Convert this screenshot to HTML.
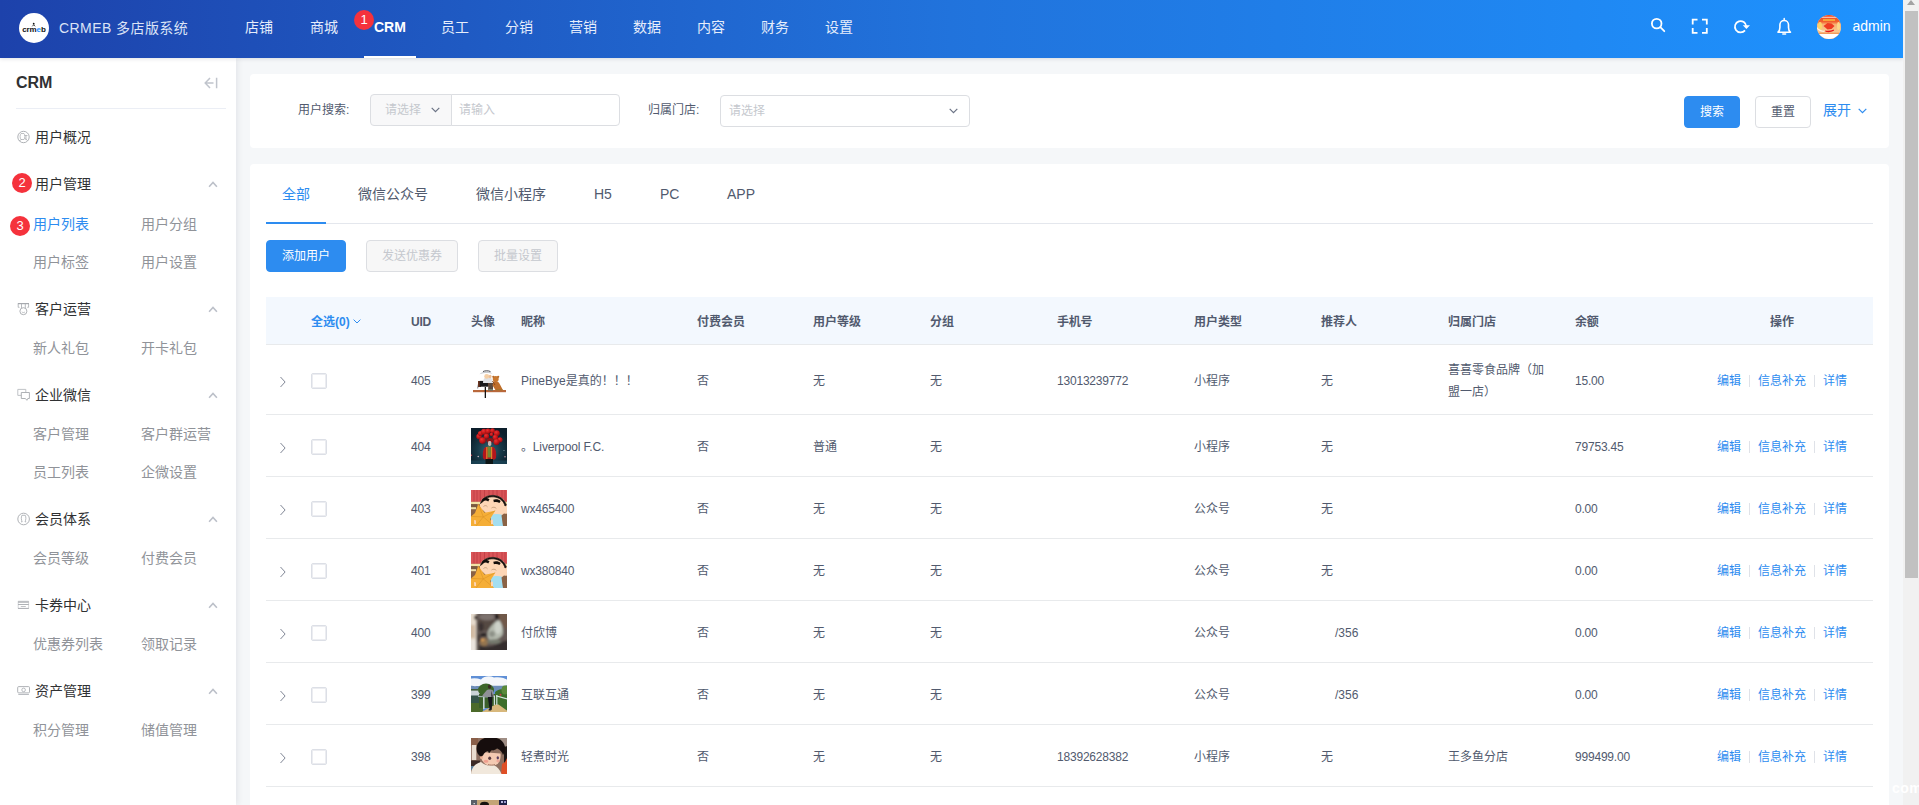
<!DOCTYPE html>
<html lang="zh-CN">
<head>
<meta charset="utf-8">
<title>CRMEB 多店版系统</title>
<style>
*{box-sizing:border-box;margin:0;padding:0}
html,body{width:1919px;height:805px;overflow:hidden;background:#f5f7f9}
body{font-family:"Liberation Sans","Noto Sans CJK SC",sans-serif;font-size:14px;color:#515a6e;position:relative}
.abs{position:absolute}
/* header */
#hd{position:absolute;left:0;top:0;width:1903px;height:58px;background:linear-gradient(90deg,#1d42ab 0%,#2173dc 50%,#1e93ff 100%);box-shadow:0 1px 4px rgba(0,21,41,.12);z-index:5}
#logo{position:absolute;left:19px;top:13px;width:30px;height:30px;border-radius:50%;background:#fff;overflow:hidden}
#title{position:absolute;left:59px;top:0;line-height:57px;font-size:14px;color:#dbe3f6;white-space:nowrap;letter-spacing:.43px}
.nav{position:absolute;top:0;line-height:54px;font-size:14px;color:#e6edfb;white-space:nowrap}
.nav.on{color:#fff;font-weight:bold}
#navline{position:absolute;left:364px;top:56px;width:52px;height:2px;background:#fff}
.badge{position:absolute;border-radius:50%;background:#f5323c;color:#fff;text-align:center;font-size:12px;z-index:9}
#admin{position:absolute;left:1852.500px;top:0;line-height:52px;font-size:14px;color:#fff}
#avatar{position:absolute;left:1817px;top:15px;width:24px;height:24px;border-radius:50%;overflow:hidden;background:#f6d9b0}
.hico{position:absolute;top:17px}
/* scrollbar */
#sb{position:absolute;left:1903px;top:0;width:16px;height:805px;background:#f1f1f1;z-index:6}
#sb i{position:absolute;left:2px;top:11px;width:13px;height:567px;background:#c1c1c1}
#sb b{position:absolute;left:4px;top:0px;width:0;height:0;border:4px solid transparent;border-top:0;border-bottom:5px solid #a3a3a3}
/* sidebar */
#side{position:absolute;left:0;top:58px;width:236px;height:747px;background:#fff;box-shadow:2px 0 6px rgba(0,21,41,.07);z-index:3}
#side h2{position:absolute;left:16px;top:15px;font-size:16px;line-height:20px;color:#303133;font-weight:bold}
#side hr{position:absolute;left:16px;top:50px;width:210px;border:0;border-top:1px solid #ebeef5}
.m1{position:absolute;left:35px;font-size:14px;line-height:20px;color:#303133;white-space:nowrap}
.m2{position:absolute;font-size:14px;line-height:20px;color:#909399;white-space:nowrap}
.m2.on{color:#2d8cf0}
.mi{position:absolute;left:17px}
.chev{position:absolute;left:208px;margin-top:-1px}
/* cards */
.card{position:absolute;left:250px;width:1639px;background:#fff;border-radius:4px}
.lbl{position:absolute;font-size:12px;line-height:20px;color:#515a6e;white-space:nowrap}
.ph{color:#c5c8ce;font-size:12px}
.btn{position:absolute;height:32px;line-height:30px;font-size:12px;border-radius:4px;text-align:center;border:1px solid transparent;white-space:nowrap}
.btn.pri{background:#2d8cf0;color:#fff;border-color:#2d8cf0}
.btn.def{background:#fff;color:#515a6e;border-color:#dcdee2}
.btn.dis{background:#f7f7f7;color:#c5c8ce;border-color:#dcdee2}
.tab{position:absolute;top:20px;font-size:14px;line-height:20px;color:#515a6e;white-space:nowrap}
.tab.on{color:#2d8cf0}
/* table */
#tb{position:absolute;left:16px;top:133px;width:1607px}
#th{position:absolute;left:0;top:0;width:1607px;height:48px;background:#f3f8fe;border-bottom:1px solid #e8eaec}
#th span{position:absolute;top:15px;line-height:20px;font-size:12px;font-weight:bold;color:#515a6e;white-space:nowrap}
.row{position:absolute;left:0;width:1607px;border-bottom:1px solid #e8eaec;font-size:12px;color:#515a6e}
.row span{position:absolute;line-height:22px;white-space:nowrap;top:50%;margin-top:-10px}
.row .cb{position:absolute;left:45px;top:50%;margin-top:-7px;width:16px;height:16px;border:1px solid #dcdfe6;border-radius:2px;background:#fff;box-shadow:inset 0 0 0 1px rgba(220,223,230,.55)}
.row .ar{position:absolute;left:13px;top:50%;margin-top:-4px}
.row .av{position:absolute;left:205px;top:50%;margin-top:-18px;width:36px;height:36px;overflow:hidden}
.row a{color:#2d8cf0;text-decoration:none}
.row .sep{position:absolute;top:50%;margin-top:-5px;width:1px;height:12px;background:#dfe2e8}
.c1{left:145px}.c3{left:255px}.c4{left:431px}.c5{left:547px}.c6{left:664px}.c7{left:791px}.c8{left:928px}.c9{left:1055px}.c10{left:1182px}.c11{left:1309px}
.c1,.c7,.c11,.ls{letter-spacing:-.2px}
.a1{left:1451px}.a2{left:1492px}.a3{left:1557px}
</style>
</head>
<body>
<div id="hd">
<div id="logo"><svg width="30" height="30" viewBox="0 0 30 30"><text x="15" y="18.5" text-anchor="middle" font-family="Liberation Sans,sans-serif" font-weight="bold" font-size="8" letter-spacing="-.1" fill="#111">crm<tspan fill="#1e90ff">e</tspan>b</text><circle cx="14.700" cy="10.700" r=".9" fill="#111"/><path d="M13.300 13.300l1.400-1.500 1.400 1.500" stroke="#111" stroke-width=".8" fill="none"/></svg></div>
<div id="title">CRMEB 多店版系统</div>
<div class="nav" style="left:245px">店铺</div>
<div class="nav" style="left:310px">商城</div>
<div class="nav on" style="left:374px">CRM</div>
<div class="nav" style="left:441px">员工</div>
<div class="nav" style="left:505px">分销</div>
<div class="nav" style="left:569px">营销</div>
<div class="nav" style="left:633px">数据</div>
<div class="nav" style="left:697px">内容</div>
<div class="nav" style="left:761px">财务</div>
<div class="nav" style="left:825px">设置</div>
<div id="navline"></div>
<div class="badge" style="left:354px;top:10px;width:20px;height:20px;line-height:20px;font-size:13px">1</div>
<svg class="abs" style="left:1640px;top:8px" width="160" height="40" viewBox="1640 8 160 40" fill="none" stroke="#fff" stroke-width="1.800">
<circle cx="1656.700" cy="23.600" r="4.800"/><path d="M1660.300 27.200l4 4" stroke-linecap="round"/>
<path d="M1692.700 24.400v-4.800h4.800M1702 19.600h4.800v4.800M1706.800 28.100v4.800H1702M1697.500 32.900h-4.800v-4.800"/>
<path d="M1745 30.400a5.700 5.700 0 1 1 1.300-3.900" stroke-width="1.700"/><path d="M1742.800 25.200h7.200l-3.600 3.800z" fill="#fff" stroke="none"/>
<path d="M1778 32.200c1.500-1.200 1.900-2.600 1.900-4.600v-2.800a4.300 4.300 0 0 1 8.600 0v2.800c0 2 .4 3.400 1.900 4.600z" stroke-width="1.600" stroke-linejoin="round"/><path d="M1784.200 18.500v1.200M1782.800 34h2.800" stroke-width="1.500" stroke-linecap="round"/>
</svg>
<div id="avatar"><svg width="24" height="24" viewBox="0 0 24 24"><defs><linearGradient id="ag" x1="0" y1="0" x2="0" y2="1"><stop offset="0" stop-color="#ef4a26"/><stop offset=".28" stop-color="#f2602e"/><stop offset=".4" stop-color="#f8b576"/><stop offset=".7" stop-color="#f9c890"/><stop offset=".8" stop-color="#f08848"/></linearGradient></defs><rect width="24" height="24" fill="url(#ag)"/><rect x="4.500" y="1.800" width="15.500" height=".9" fill="#fde9dd"/><rect x="6" y="4.200" width="12" height="1.600" fill="#f9b83c"/><ellipse cx="3" cy="11" rx="2" ry="4" fill="#fbd36a"/><ellipse cx="21.500" cy="11" rx="1.500" ry="4" fill="#fbd98a"/><path d="M6.500 11l4-3 4 .5 3 2.500-3 3-4 .5z" fill="#ee3b22"/><path d="M8.200 15.500c3 .5 6 .2 8.500-1l.3 1.300c-2.500 1.400-6 1.700-8.500 1z" fill="#e8131a"/><path d="M0 12c2 3 6 4 8 3.600L7 17c-3 0-5-1-7-3z" fill="#fdf0e2"/><rect y="19" width="24" height="5" fill="#fff"/></svg></div>
<div id="admin">admin</div>
</div>
<div id="sb"><b></b><i></i></div>
<div id="side">
<h2>CRM</h2>
<svg class="abs" style="left:204px;top:19px" width="14" height="12" viewBox="0 0 14 12" fill="none" stroke="#c0c4cc" stroke-width="1.500"><path d="M1.200 6h8.300M6 1L1.200 6 6 11M12.600 .8v10.400"/></svg>
<hr>
<div class="m1" style="top:69px">用户概况</div>
<div class="m1" style="top:116px">用户管理</div>
<svg class="chev" style="top:124px" width="10" height="7" viewBox="0 0 10 7" fill="none" stroke="#bcc0c9" stroke-width="1.600"><path d="M1.100 5.700L5 1.500l3.900 4.200"/></svg>
<div class="m2 on" style="left:33px;top:156px">用户列表</div>
<div class="m2" style="left:141px;top:156px">用户分组</div>
<div class="m2" style="left:33px;top:194px">用户标签</div>
<div class="m2" style="left:141px;top:194px">用户设置</div>
<div class="m1" style="top:241px">客户运营</div>
<svg class="chev" style="top:249px" width="10" height="7" viewBox="0 0 10 7" fill="none" stroke="#bcc0c9" stroke-width="1.600"><path d="M1.100 5.700L5 1.500l3.900 4.200"/></svg>
<div class="m2" style="left:33px;top:280px">新人礼包</div>
<div class="m2" style="left:141px;top:280px">开卡礼包</div>
<div class="m1" style="top:327px">企业微信</div>
<svg class="chev" style="top:335px" width="10" height="7" viewBox="0 0 10 7" fill="none" stroke="#bcc0c9" stroke-width="1.600"><path d="M1.100 5.700L5 1.500l3.900 4.200"/></svg>
<div class="m2" style="left:33px;top:366px">客户管理</div>
<div class="m2" style="left:141px;top:366px">客户群运营</div>
<div class="m2" style="left:33px;top:404px">员工列表</div>
<div class="m2" style="left:141px;top:404px">企微设置</div>
<div class="m1" style="top:451px">会员体系</div>
<svg class="chev" style="top:459px" width="10" height="7" viewBox="0 0 10 7" fill="none" stroke="#bcc0c9" stroke-width="1.600"><path d="M1.100 5.700L5 1.500l3.900 4.200"/></svg>
<div class="m2" style="left:33px;top:490px">会员等级</div>
<div class="m2" style="left:141px;top:490px">付费会员</div>
<div class="m1" style="top:537px">卡券中心</div>
<svg class="chev" style="top:545px" width="10" height="7" viewBox="0 0 10 7" fill="none" stroke="#bcc0c9" stroke-width="1.600"><path d="M1.100 5.700L5 1.500l3.900 4.200"/></svg>
<div class="m2" style="left:33px;top:576px">优惠券列表</div>
<div class="m2" style="left:141px;top:576px">领取记录</div>
<div class="m1" style="top:623px">资产管理</div>
<svg class="chev" style="top:631px" width="10" height="7" viewBox="0 0 10 7" fill="none" stroke="#bcc0c9" stroke-width="1.600"><path d="M1.100 5.700L5 1.500l3.900 4.200"/></svg>
<div class="m2" style="left:33px;top:662px">积分管理</div>
<div class="m2" style="left:141px;top:662px">储值管理</div>
<svg class="abs" style="left:15px;top:62px" width="17" height="650" viewBox="15 120 17 650" fill="none" stroke="#a6a9ae" stroke-width=".9">
<circle cx="23.500" cy="137" r="5.700"/><path d="M21 133.500c-1.200 1.200-1.200 4.800 0 6h3c1.200-1.200 1.200-4.800 0-6zM24.500 135.500h3M26 135.500v4.500M24.500 138l3 2.500M19 141l2.500-1.500" stroke-width=".7"/>
<path d="M17.800 303.600h11.200" stroke-width="1.200"/><path d="M18.200 304v3.300h1.300M28.600 304v3.300h-1.300M21.500 304v4.200M25.300 304v4.200" stroke-width=".8"/><circle cx="23.400" cy="311.200" r="3.500"/><path d="M21.800 311.800c.8 1 2.400 1 3.200 0" stroke-width=".7"/>
<path d="M21.300 395.400h-3.500v-6h8v3.100" stroke="#b9bcc1"/><path d="M21.300 392.500h8.100v6h-1.600l-.9 1.800-1.500-1.800h-4.100z"/>
<circle cx="23.600" cy="519" r="5.800"/><path d="M21 521.800h1.200c-1-2-1.200-4.500-.3-6.500h3.400c.9 2 .7 4.500-.3 6.500h1.200" stroke-width=".8"/>
<path d="M18.200 601.200h10.400v7.300H18.200z" stroke-width=".7" stroke="#c4c6ca"/><path d="M18 602h10.800" stroke-width="1.600" stroke="#b4b6ba"/><path d="M18 604.500h10.800M18 608.400h10.800" stroke-width=".9"/><path d="M20.800 606.500h5" stroke-width=".7"/>
<rect x="17.700" y="686.600" width="11.800" height="6.300" rx="1"/><circle cx="23.600" cy="689.900" r="1.800" stroke-width=".8"/><path d="M18.300 694.500h10.600" stroke-width="1" stroke="#b9bcc1"/>
</svg>
<div class="badge" style="left:12px;top:115px;width:20px;height:20px;line-height:20px;font-size:13px">2</div>
<div class="badge" style="left:10px;top:158px;width:20px;height:20px;line-height:20px;font-size:13px">3</div>
</div>
<div class="card" id="c1" style="top:74px;height:74px">
<div class="lbl" style="left:48px;top:26px">用户搜索:</div>
<div class="abs" style="left:120px;top:20px;width:82px;height:32px;border:1px solid #dcdee2;border-radius:4px 0 0 4px;background:#f8f8f9"></div>
<div class="abs" style="left:201px;top:20px;width:169px;height:32px;border:1px solid #dcdee2;border-radius:0 4px 4px 0;background:#fff"></div>
<div class="lbl ph" style="left:135px;top:26px">请选择</div>
<svg class="abs" style="left:181px;top:33px" width="9" height="6" viewBox="0 0 9 6" fill="none" stroke="#6b7385" stroke-width="1.200"><path d="M.7.900L4.500 4.700 8.300.900"/></svg>
<div class="lbl ph" style="left:209px;top:26px">请输入</div>
<div class="lbl" style="left:398px;top:26px">归属门店:</div>
<div class="abs" style="left:470px;top:21px;width:250px;height:32px;border:1px solid #dcdee2;border-radius:4px;background:#fff"></div>
<div class="lbl ph" style="left:479px;top:27px">请选择</div>
<svg class="abs" style="left:699px;top:34px" width="9" height="6" viewBox="0 0 9 6" fill="none" stroke="#6b7385" stroke-width="1.200"><path d="M.7.900L4.500 4.700 8.300.900"/></svg>
<div class="btn pri" style="left:1434px;top:22px;width:56px">搜索</div>
<div class="btn def" style="left:1505px;top:22px;width:56px">重置</div>
<div class="abs" style="left:1573px;top:26px;font-size:14px;line-height:20px;color:#2d8cf0">展开</div>
<svg class="abs" style="left:1608px;top:34px" width="9" height="6" viewBox="0 0 9 6" fill="none" stroke="#2d8cf0" stroke-width="1.200"><path d="M.7.900L4.500 4.700 8.300.900"/></svg>
</div>
<div class="card" id="c2" style="top:164px;height:700px">
<div class="abs" style="left:16px;top:59px;width:1607px;height:1px;background:#e4e7ed"></div>
<div class="abs" style="left:16px;top:58px;width:60px;height:2px;background:#2d8cf0"></div>
<div class="tab on" style="left:32px">全部</div>
<div class="tab" style="left:108px">微信公众号</div>
<div class="tab" style="left:226px">微信小程序</div>
<div class="tab" style="left:344px">H5</div>
<div class="tab" style="left:410px">PC</div>
<div class="tab" style="left:477px">APP</div>
<div class="btn pri" style="left:16px;top:76px;width:80px">添加用户</div>
<div class="btn dis" style="left:116px;top:76px;width:92px">发送优惠券</div>
<div class="btn dis" style="left:228px;top:76px;width:80px">批量设置</div>
<div id="tb">
<div id="th"><span style="left:45px;color:#2d8cf0">全选(0)</span><svg class="abs" style="left:87px;top:22px" width="8" height="5" viewBox="0 0 8 5" fill="none" stroke="#2d8cf0" stroke-width="1"><path d="M.6.600L4 4 7.400.600"/></svg><span class="c1">UID</span><span style="left:205px">头像</span><span class="c3">昵称</span><span class="c4">付费会员</span><span class="c5">用户等级</span><span class="c6">分组</span><span class="c7">手机号</span><span class="c8">用户类型</span><span class="c9">推荐人</span><span class="c10">归属门店</span><span class="c11">余额</span><span style="left:1504px">操作</span></div>
<div class="row" style="top:48px;height:70px"><svg class="ar" width="8" height="12" viewBox="0 0 8 12" fill="none" stroke="#808695" stroke-width="1"><path d="M1.500 1l4.600 5-4.600 5"/></svg><div class="cb"></div><span class="c1">405</span><div class="av"><svg width="36" height="36" viewBox="0 0 36 36"><rect width="36" height="36" fill="#fff"/><rect x="2" y="28" width="33" height="2.200" fill="#b9683c"/><rect x="13.700" y="25" width="1.300" height="11" fill="#141414"/><path d="M6.500 26.500l1.200-5" stroke="#9aa0a6" stroke-width="1.200"/><rect x="7" y="19" width="3" height="6" fill="#6a3520"/><rect x="8.700" y="18.900" width="8.500" height="5.800" fill="#19191b"/><rect x="17" y="19.500" width="2" height="5" fill="#6a3a22"/><path d="M12 21c0-4 2-6.500 5-6.500s4.500 2.500 4.500 6.500z" fill="#dfe2e6"/><ellipse cx="15.700" cy="14.400" rx="2.500" ry="2.400" fill="#f5cfa6"/><ellipse cx="19.200" cy="14.600" rx="1.400" ry="1.800" fill="#eebf95"/><path d="M8.500 12.300c2-3.200 10-4.200 13-.4-3-1.200-9-1.200-13 .4z" fill="#c8ccd2"/><path d="M12 9.600c1.500-1 5.500-1.200 7.500 0" stroke="#3a3a40" stroke-width=".9" fill="none"/><path d="M17.500 21h4.500v7.500h-5z" fill="#5b4a3f"/><path d="M17 27h5v1.500h-5z" fill="#76806a"/><circle cx="24.700" cy="17" r="3" fill="#c9782f"/><circle cx="22.300" cy="14.800" r="1.100" fill="#b86a28"/><circle cx="27.200" cy="14.800" r="1.100" fill="#b86a28"/><path d="M22.500 19.500c3-1 5.500 0 6.500 3l3 5.700h-7.500l-3-5z" fill="#bf6e2a"/><path d="M25 27.200h6.500v1.300H25z" fill="#a8742e"/><path d="M21.500 19l2.500 4" stroke="#8a4a1e" stroke-width="1"/></svg></div><span class="c3">PineBye是真的！！！</span><span class="c4">否</span><span class="c5">无</span><span class="c6">无</span><span class="c7">13013239772</span><span class="c8">小程序</span><span class="c9">无</span><span class="c10" style="margin-top:-21px">喜喜零食品牌（加<br>盟一店）</span><span class="c11">15.00</span><span class="a1"><a>编辑</a></span><i class="sep" style="left:1483px"></i><span class="a2"><a>信息补充</a></span><i class="sep" style="left:1548px"></i><span class="a3"><a>详情</a></span></div>
<div class="row" style="top:118px;height:62px"><svg class="ar" width="8" height="12" viewBox="0 0 8 12" fill="none" stroke="#808695" stroke-width="1"><path d="M1.500 1l4.600 5-4.600 5"/></svg><div class="cb"></div><span class="c1">404</span><div class="av"><svg width="36" height="36" viewBox="0 0 36 36"><defs><radialGradient id="g404" cx=".5" cy=".62" r=".6"><stop offset="0" stop-color="#2f6676"/><stop offset=".55" stop-color="#173847"/><stop offset="1" stop-color="#0c1e2b"/></radialGradient><filter id="b4"><feGaussianBlur stdDeviation=".45"/></filter><radialGradient id="bl" cx=".38" cy=".32" r=".75"><stop offset="0" stop-color="#e83434"/><stop offset=".55" stop-color="#c31417"/><stop offset="1" stop-color="#7c0c12"/></radialGradient></defs><rect width="36" height="36" fill="url(#g404)"/><rect y="32.500" width="36" height="3.500" fill="#1d4a5c" opacity=".7"/><g filter="url(#b4)"><g fill="url(#bl)"><circle cx="8" cy="8.500" r="2.700"/><circle cx="9.500" cy="5.500" r="2.600"/><circle cx="13" cy="3.800" r="3"/><circle cx="17" cy="3.200" r="2.700"/><circle cx="15.500" cy="8.300" r="2.700"/><circle cx="11.500" cy="12.600" r="3.300"/><circle cx="21.500" cy="2.800" r="2.500"/><circle cx="25.800" cy="5.300" r="3"/><circle cx="24.300" cy="9.600" r="2.800"/><circle cx="29" cy="11.800" r="2.600"/><circle cx="25.500" cy="14" r="3.100"/><circle cx="20.500" cy="6.500" r="1.800"/></g><ellipse cx="18.800" cy="12.400" rx="3.400" ry="2.400" fill="#8f1319"/><rect x="17" y="13" width="3.300" height="5" rx="1.400" fill="#c9b4b0"/><path d="M12 30c-.6-5 0-9 2.500-11h8c2.500 2 3.200 6 2.500 11-1 1.500-2 1.800-3 1.600h-7c-1.200.2-2.200-.2-3-1.600z" fill="#b3161f"/><rect x="16.500" y="18.500" width="3.400" height="11" fill="#6f8a34"/><rect x="15.200" y="19" width="1.200" height="12" fill="#e0822a"/><rect x="20" y="19" width="1.200" height="12" fill="#e0822a"/><rect x="14.500" y="31" width="7.500" height="5" fill="#0f1318"/></g><circle cx="7.200" cy="28.500" r=".7" fill="#e9c8d0"/><circle cx="34" cy="28.800" r=".7" fill="#d9a0b0"/><circle cx="33" cy="22.500" r=".5" fill="#9fb8c0"/><circle cx="0.500" cy="27.200" r=".7" fill="#d04050"/></svg></div><span class="c3" style="letter-spacing:-.15px">。Liverpool F.C.</span><span class="c4">否</span><span class="c5">普通</span><span class="c6">无</span><span class="c8">小程序</span><span class="c9">无</span><span class="c11">79753.45</span><span class="a1"><a>编辑</a></span><i class="sep" style="left:1483px"></i><span class="a2"><a>信息补充</a></span><i class="sep" style="left:1548px"></i><span class="a3"><a>详情</a></span></div>
<div class="row" style="top:180px;height:62px"><svg class="ar" width="8" height="12" viewBox="0 0 8 12" fill="none" stroke="#808695" stroke-width="1"><path d="M1.500 1l4.600 5-4.600 5"/></svg><div class="cb"></div><span class="c1">403</span><div class="av"><svg width="36" height="36" viewBox="0 0 36 36"><rect width="36" height="36" fill="#8a6245"/><rect width="36" height="11.800" fill="#d95558"/><g stroke="#b9383f" stroke-width=".7"><path d="M3 0v11.800M6 0v11.800M9.300 0v11.800M13.500 0v11.800M18 0v8M22 0v6M26 0v7M31 0v11.800M34 0v11.800"/></g><rect y="11.800" width="36" height="2.400" fill="#f1e2a6"/><rect y="14.200" width="6" height="3" fill="#7a5a40"/><rect y="17.200" width="5" height="2" fill="#efe0a8"/><path d="M9 14C10 8 16 5 22 5.300c8 .4 12.500 5 14 10v8c-1 1.500-3 2.500-6 3l-4 3-6-1-8-8c-2.500-1.500-3.500-3.500-3-6.300z" fill="#fdd6b6"/><path d="M9.500 13.500C11 8 16 5.200 22 5.400c7 .3 11.500 4 13.300 9.800l-1.300.8c-1.200-4.500-4.500-8-10-9-5-.6-9.500.4-12 4.500z" fill="#120d0b" stroke="#120d0b" stroke-width=".7"/><path d="M11.300 9c2.200-1.500 5.200-1.500 7.200.3l-1.300 2.200c-1.400-1.100-3.400-1.200-5.200-.1z" fill="#120d0b"/><path d="M22.300 9.800c2.500-1 5.600-.5 7.400 1.300l-1.300 2c-1.600-1.200-3.500-1.500-5.500-.8z" fill="#120d0b"/><path d="M12.500 16.500c1.200-1.200 3-1.200 4 .3M20.500 18c1.400-1.200 3.600-1 4.800.4" stroke="#a8835f" stroke-width=".6" fill="none"/><path d="M20 25.500c3-1.800 8-1.800 11.500-.5l.6 11H19.500z" fill="#a4def0"/><path d="M0 31h3v5H0z" fill="#a4def0"/><path d="M30.500 25.500l2.500-2 3 .5v12h-4z" fill="#8a6245"/><path d="M7.300 13.900l6.200 8.900 10.700-2.100-5.200 8.500 4 7.100H.0V26.400l4-3.400z" fill="#f5ae37"/><path d="M7.300 13.900l5 13 11.900-6.200M12.300 26.900L0 26.400M12.300 26.900l10 8.500M12.300 26.900L5 36" stroke="#d68f22" stroke-width=".5" fill="none"/><path d="M3 30.500c.6-.8 1.700-.6 2 .5v3H3.300z" fill="#fdd6b6"/><path d="M20 30c.8-.8 2-.4 2 .8v3.500h-2z" fill="#fdd6b6"/></svg></div><span class="c3 ls">wx465400</span><span class="c4">否</span><span class="c5">无</span><span class="c6">无</span><span class="c8">公众号</span><span class="c9">无</span><span class="c11">0.00</span><span class="a1"><a>编辑</a></span><i class="sep" style="left:1483px"></i><span class="a2"><a>信息补充</a></span><i class="sep" style="left:1548px"></i><span class="a3"><a>详情</a></span></div>
<div class="row" style="top:242px;height:62px"><svg class="ar" width="8" height="12" viewBox="0 0 8 12" fill="none" stroke="#808695" stroke-width="1"><path d="M1.500 1l4.600 5-4.600 5"/></svg><div class="cb"></div><span class="c1">401</span><div class="av"><svg width="36" height="36" viewBox="0 0 36 36"><rect width="36" height="36" fill="#8a6245"/><rect width="36" height="11.800" fill="#d95558"/><g stroke="#b9383f" stroke-width=".7"><path d="M3 0v11.800M6 0v11.800M9.300 0v11.800M13.500 0v11.800M18 0v8M22 0v6M26 0v7M31 0v11.800M34 0v11.800"/></g><rect y="11.800" width="36" height="2.400" fill="#f1e2a6"/><rect y="14.200" width="6" height="3" fill="#7a5a40"/><rect y="17.200" width="5" height="2" fill="#efe0a8"/><path d="M9 14C10 8 16 5 22 5.300c8 .4 12.500 5 14 10v8c-1 1.500-3 2.500-6 3l-4 3-6-1-8-8c-2.500-1.500-3.500-3.500-3-6.300z" fill="#fdd6b6"/><path d="M9.500 13.500C11 8 16 5.200 22 5.400c7 .3 11.500 4 13.300 9.800l-1.300.8c-1.200-4.500-4.500-8-10-9-5-.6-9.500.4-12 4.500z" fill="#120d0b" stroke="#120d0b" stroke-width=".7"/><path d="M11.300 9c2.200-1.500 5.200-1.500 7.200.3l-1.300 2.200c-1.400-1.100-3.400-1.200-5.200-.1z" fill="#120d0b"/><path d="M22.300 9.800c2.500-1 5.600-.5 7.400 1.300l-1.300 2c-1.600-1.200-3.500-1.500-5.500-.8z" fill="#120d0b"/><path d="M12.500 16.500c1.200-1.200 3-1.200 4 .3M20.500 18c1.400-1.200 3.600-1 4.800.4" stroke="#a8835f" stroke-width=".6" fill="none"/><path d="M20 25.500c3-1.800 8-1.800 11.500-.5l.6 11H19.500z" fill="#a4def0"/><path d="M0 31h3v5H0z" fill="#a4def0"/><path d="M30.500 25.500l2.500-2 3 .5v12h-4z" fill="#8a6245"/><path d="M7.300 13.900l6.200 8.900 10.700-2.100-5.200 8.500 4 7.100H.0V26.400l4-3.400z" fill="#f5ae37"/><path d="M7.300 13.900l5 13 11.900-6.200M12.300 26.900L0 26.400M12.300 26.900l10 8.500M12.300 26.900L5 36" stroke="#d68f22" stroke-width=".5" fill="none"/><path d="M3 30.500c.6-.8 1.700-.6 2 .5v3H3.300z" fill="#fdd6b6"/><path d="M20 30c.8-.8 2-.4 2 .8v3.500h-2z" fill="#fdd6b6"/></svg></div><span class="c3 ls">wx380840</span><span class="c4">否</span><span class="c5">无</span><span class="c6">无</span><span class="c8">公众号</span><span class="c9">无</span><span class="c11">0.00</span><span class="a1"><a>编辑</a></span><i class="sep" style="left:1483px"></i><span class="a2"><a>信息补充</a></span><i class="sep" style="left:1548px"></i><span class="a3"><a>详情</a></span></div>
<div class="row" style="top:304px;height:62px"><svg class="ar" width="8" height="12" viewBox="0 0 8 12" fill="none" stroke="#808695" stroke-width="1"><path d="M1.500 1l4.600 5-4.600 5"/></svg><div class="cb"></div><span class="c1">400</span><div class="av"><svg width="36" height="36" viewBox="0 0 36 36"><defs><filter id="b0" x="-.2" y="-.2" width="1.4" height="1.4"><feGaussianBlur stdDeviation="1.250"/></filter></defs><rect width="36" height="36" fill="#655a55"/><g filter="url(#b0)"><rect x="-3" y="-3" width="8.500" height="42" fill="#e6dbcd"/><rect x="-3" y="11" width="7" height="13" fill="#d2bba3"/><rect x="27" y="-3" width="12" height="17" fill="#6f5849"/><path d="M5.500 39V9C5.500 1 10-2 17-2s11 4 12 8l6 14v19z" fill="#625753"/><ellipse cx="15" cy="9" rx="8.500" ry="7.500" fill="#544842"/><ellipse cx="16" cy="3" rx="8" ry="3.500" fill="#7b716d"/><ellipse cx="10" cy="13" rx="2.500" ry="4.500" fill="#3b3230"/><path d="M18 15c3-5 7-8 10-9 3 3 5 10 3.500 15-3 4-8 6-13 5-2.500-3-2.500-7-.5-11z" fill="#b4b9ad"/><ellipse cx="27" cy="13.500" rx="3.500" ry="6.500" fill="#cdd2c9"/><ellipse cx="21" cy="20" rx="3" ry="3" fill="#8e9288"/><ellipse cx="12.500" cy="20.800" rx="3.200" ry="1.500" fill="#151313"/><ellipse cx="25.800" cy="2.600" rx="2" ry="2.500" fill="#1c1716"/><ellipse cx="4.600" cy="3.500" rx="1.400" ry="2.300" fill="#2f2623"/><ellipse cx="13" cy="28" rx="4" ry="4" fill="#94754f"/><ellipse cx="11.500" cy="26" rx="1.600" ry="1.300" fill="#e3a55c"/><path d="M8 39v-8c4 2 10 2 16 0 4-2 8-4 13-5v13z" fill="#352e2d"/><ellipse cx="23" cy="27.500" rx="7" ry="2.300" fill="#767a6e"/><rect x="-3" y="26" width="8" height="13" fill="#ebe5df"/><ellipse cx="8" cy="24" rx="2" ry="4" fill="#4a403c"/></g></svg></div><span class="c3">付欣博</span><span class="c4">否</span><span class="c5">无</span><span class="c6">无</span><span class="c8">公众号</span><span class="c9"><i style="margin-left:14px;font-style:normal">/356</i></span><span class="c11">0.00</span><span class="a1"><a>编辑</a></span><i class="sep" style="left:1483px"></i><span class="a2"><a>信息补充</a></span><i class="sep" style="left:1548px"></i><span class="a3"><a>详情</a></span></div>
<div class="row" style="top:366px;height:62px"><svg class="ar" width="8" height="12" viewBox="0 0 8 12" fill="none" stroke="#808695" stroke-width="1"><path d="M1.500 1l4.600 5-4.600 5"/></svg><div class="cb"></div><span class="c1">399</span><div class="av"><svg width="36" height="36" viewBox="0 0 36 36"><defs><filter id="b9"><feGaussianBlur stdDeviation=".7"/></filter></defs><rect width="36" height="36" fill="#5f8fd6"/><g filter="url(#b9)"><rect x="-2" y="8" width="40" height="6.500" fill="#6d8db8"/><path d="M-2 3c4-1 8-1 12 .5C13 0 19-.5 23 1.500c5-1 10 0 15 3V9c-6 1.500-12 .5-17 .8-6 .8-10-.2-14 .2s-6 0-9-.5z" fill="#f4f6fa"/><rect x="-2" y="13.500" width="12" height="6.500" fill="#c9d3d8"/><rect x="-2" y="13" width="9" height="1.600" fill="#3f5d3a"/><rect x="-2" y="19.500" width="14" height="9" fill="#35544c"/><rect x="-2" y="27" width="14" height="11" fill="#4b6b2b"/><ellipse cx="15" cy="14" rx="8" ry="6.500" fill="#3c662c"/><rect x="8" y="18" width="18" height="14" fill="#3a5f2c"/><path d="M24 16c3-2 5-3 7-2.500 1-3 3-4 7-4v27H26z" fill="#3c6e2c"/><ellipse cx="34" cy="14" rx="3.500" ry="4.500" fill="#5a8a3a"/><path d="M7 38l17.500-9.500h3L38 36v2z" fill="#d8b87c"/></g><g><rect x="12" y="20.500" width="1.600" height="12.500" fill="#c6d4d2"/><path d="M7 19.800l10 .6v1l-10-.5z" fill="#9fb3b0"/><rect x="22.800" y="19.500" width="1.200" height="9.500" fill="#cfe0dc"/><rect x="25.200" y="19" width="1.200" height="10" fill="#cfe0dc"/><path d="M25.200 19.200l10.800 3v1.400l-10.800-3z" fill="#d5e6e0"/><circle cx="29.500" cy="18.800" r="1" fill="#d23a4a"/><ellipse cx="18.500" cy="10.800" rx="1.600" ry="2" fill="#3a2a24"/><path d="M15.500 14.500c1-1.300 5-1.300 6.500 0l1 6.500h-7l-4.500-.8v-1z" fill="#8f9096"/><path d="M20.300 14.500l1.600 6.300h-1.600z" fill="#2a2a30"/><path d="M16.800 21h4.600l-.6 12.500h-2.200z" fill="#16181e"/><path d="M17.800 33h3l-.8 1.600h-2.500z" fill="#20242c"/></g></svg></div><span class="c3">互联互通</span><span class="c4">否</span><span class="c5">无</span><span class="c6">无</span><span class="c8">公众号</span><span class="c9"><i style="margin-left:14px;font-style:normal">/356</i></span><span class="c11">0.00</span><span class="a1"><a>编辑</a></span><i class="sep" style="left:1483px"></i><span class="a2"><a>信息补充</a></span><i class="sep" style="left:1548px"></i><span class="a3"><a>详情</a></span></div>
<div class="row" style="top:428px;height:62px"><svg class="ar" width="8" height="12" viewBox="0 0 8 12" fill="none" stroke="#808695" stroke-width="1"><path d="M1.500 1l4.600 5-4.600 5"/></svg><div class="cb"></div><span class="c1">398</span><div class="av"><svg width="36" height="36" viewBox="0 0 36 36"><defs><filter id="b8"><feGaussianBlur stdDeviation=".45"/></filter></defs><rect width="36" height="36" fill="#8e6f60"/><g filter="url(#b8)"><rect x="26" y="-1" width="11" height="12" fill="#9f8d84"/><rect x="-1" y="-1" width="8" height="9" fill="#8a5f48"/><rect x=".8" y="7" width="4.500" height="15" fill="#e9dccf"/><rect x="-1" y="22.500" width="10" height="6" fill="#3a2a26"/><rect x="-1" y="28" width="4" height="4" fill="#5b7d96"/><path d="M33 9c2-1 3-1 4-.5V26h-4z" fill="#1d1512"/><path d="M31 26l3-2 3-6v19h-7z" fill="#df4f28"/><path d="M10 14c-1 5 1 10 5 12.500 4 2 9 1.500 12-1 2-2.500 3-6 2.500-10z" fill="#f4cab2"/><ellipse cx="10.500" cy="19" rx="1.500" ry="2.200" fill="#e9b096"/><path d="M6 14C4 6 9 0 18-1c8-.5 15 3 16 10 .5 3-.5 6-2 8-1-3-3-5.500-6-6.500-1.500 1.500-3.500 2-5.500 1.700l-2.500 3-1-2.200c-2 .5-4 2-5 4.500l-2 1C8.500 18 7 16.500 6 14z" fill="#15100e"/><ellipse cx="18.700" cy="20.300" rx="1.500" ry="1.700" fill="#5a3a40"/><ellipse cx="26.800" cy="19.800" rx="1.200" ry="1.600" fill="#5a4060"/><ellipse cx="15" cy="23.200" rx="2.400" ry="1.500" fill="#f0a090"/><ellipse cx="27" cy="23" rx="1.600" ry="1.200" fill="#f0a898"/><path d="M17 26.500c2 .8 5 .8 7 0" stroke="#8a5a48" stroke-width=".7" fill="none"/><path d="M0 36c.5-6 4-10.500 10-12 3 3 8 4.500 13 3.500 3 1 6 4 7.500 8.500z" fill="#f1e8dc"/></g></svg></div><span class="c3">轻煮时光</span><span class="c4">否</span><span class="c5">无</span><span class="c6">无</span><span class="c7">18392628382</span><span class="c8">小程序</span><span class="c9">无</span><span class="c10">王多鱼分店</span><span class="c11">999499.00</span><span class="a1"><a>编辑</a></span><i class="sep" style="left:1483px"></i><span class="a2"><a>信息补充</a></span><i class="sep" style="left:1548px"></i><span class="a3"><a>详情</a></span></div>
<div class="row" style="top:490px;height:62px"><svg class="ar" width="8" height="12" viewBox="0 0 8 12" fill="none" stroke="#808695" stroke-width="1"><path d="M1.500 1l4.600 5-4.600 5"/></svg><div class="cb"></div><span class="c1">397</span><div class="av"><svg width="36" height="36" viewBox="0 0 36 36"><rect width="36" height="36" fill="#c4a476"/><rect width="6" height="36" fill="#5b6068"/><rect x="28" width="8" height="36" fill="#1f2148"/><rect x="30" y="1" width="2" height="2" fill="#b8b8e0"/><rect x="33" y="1" width="2" height="2" fill="#9a9ad0"/><ellipse cx="13.500" cy="5" rx="4.500" ry="3.200" fill="#17120f"/><rect x="2.500" y="3" width="1.500" height="1.200" fill="#d0d4d8"/></svg></div></div>
</div>
</div>
<div class="abs" style="left:1892px;top:780px;font-size:14px;line-height:16px;color:#fff;font-weight:bold;z-index:10;white-space:nowrap;letter-spacing:.4px">com</div>
</body>
</html>
